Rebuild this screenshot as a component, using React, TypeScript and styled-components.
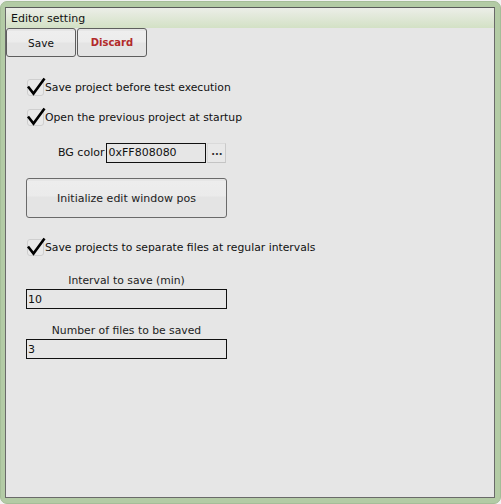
import React from "react";
import styled, { createGlobalStyle } from "styled-components";

const Global = createGlobalStyle`
  html, body { margin: 0; padding: 0; background: #f2f2f2; }
  body { font-family: "DejaVu Sans", "Liberation Sans", sans-serif; }
  * { box-sizing: border-box; }
`;

const Frame = styled.div`
  width: 501px;
  height: 503px;
  margin-top: 1px;
  background: #b3cba5;
  border: 1px solid #a5bd98;
  border-radius: 7px;
  padding: 5px 5px 5px 4px;
  display: flex;
`;

const Panel = styled.div`
  flex: 1;
  border: 1px solid #6a6a6a;
  border-top-color: #5a5a5a;
  background: #e6e6e6;
  display: flex;
  flex-direction: column;
`;

const TitleBar = styled.div`
  height: 20px;
  background: linear-gradient(#eceee8, #d3e1c5);
  font-size: 11px;
  color: #111;
  padding-left: 5px;
  display: flex;
  align-items: center;
`;

const Toolbar = styled.div`
  display: flex;
  gap: 1px;
`;

const ToolButton = styled.button<{ $danger?: boolean }>`
  width: 70px;
  height: 29px;
  margin: 0;
  border: 1px solid #5e5e5e;
  border-radius: 3px;
  background: linear-gradient(#e6e6e6 0, #e6e6e6 2px, #eeeeee 2px, #ececec 13px, #e4e4e4 14px, #e4e4e4 100%);
  font-family: "DejaVu Sans", sans-serif;
  font-size: ${(p) => (p.$danger ? "10px" : "10.5px")};
  font-weight: ${(p) => (p.$danger ? "bold" : "normal")};
  color: ${(p) => (p.$danger ? "#b22a2a" : "#111")};
  padding: 0;
`;

const Content = styled.div`
  display: flex;
  flex-direction: column;
  padding: 21px 0 0 20px;
`;

const CheckRow = styled.div<{ $top: number }>`
  display: flex;
  align-items: center;
  height: 19px;
  margin-top: ${(p) => p.$top}px;
  font-size: 10.8px;
  color: #111;
`;

const Box = styled.span`
  position: relative;
  width: 17px;
  height: 17px;
  border: 1px solid #cfcfcf;
  border-radius: 3px;
  background: #e9e9e9;
  margin-left: 1px;
  margin-right: 1px;
  flex-shrink: 0;
`;

const Tick = styled.svg`
  position: absolute;
  left: -1px;
  top: -3px;
  width: 19px;
  height: 20px;
  overflow: visible;
`;

const ColorRow = styled.div`
  display: flex;
  align-items: center;
  margin-top: 15px;
  height: 21px;
`;

const ColorLabel = styled.span`
  font-size: 11px;
  color: #111;
  margin-left: 32px;
  margin-right: 2px;
`;

const TextBox = styled.div<{ $w: number }>`
  width: ${(p) => p.$w}px;
  height: 20px;
  border: 1px solid #111;
  background: #e6e6e6;
  font-size: 11px;
  color: #111;
  padding-left: 1px;
  display: flex;
  align-items: center;
`;

const DotsButton = styled.div`
  width: 19px;
  height: 20px;
  margin-left: 1px;
  margin-top: 1px;
  background: #e8e8e8;
  border: 1px solid #dadada;
  border-right-color: #cacaca;
  border-bottom-color: #c4c4c4;
  font-size: 10px;
  font-weight: bold;
  color: #333;
  display: flex;
  align-items: center;
  justify-content: center;
  padding-bottom: 3px;
`;

const BigButton = styled.div`
  width: 201px;
  height: 40px;
  margin-top: 15px;
  border: 1px solid #6a6a6a;
  border-radius: 3px;
  background: linear-gradient(#e6e6e6 0, #e6e6e6 2px, #ededed 2px, #ebebeb 17px, #e4e4e4 18px, #e4e4e4 100%);
  font-size: 11px;
  color: #222;
  display: flex;
  align-items: center;
  justify-content: center;
`;

const Field = styled.div<{ $top: number }>`
  display: flex;
  flex-direction: column;
  width: 201px;
  margin-top: ${(p) => p.$top}px;
`;

const FieldLabel = styled.div`
  font-size: 10.8px;
  color: #222;
  text-align: center;
  height: 15px;
  line-height: 15px;
  margin-bottom: 1px;
`;

const Check = () => (
  <Box>
    <Tick viewBox="0 0 19 20">
      <path
        d="M1 9.5 L6.5 16.5 L17.5 1.5"
        fill="none"
        stroke="#000"
        strokeWidth="2.6"
        strokeLinejoin="miter"
      />
    </Tick>
  </Box>
);

export default function App() {
  return (
    <>
      <Global />
      <Frame>
        <Panel>
          <TitleBar>Editor setting</TitleBar>
          <Toolbar>
            <ToolButton>Save</ToolButton>
            <ToolButton $danger>Discard</ToolButton>
          </Toolbar>
          <Content>
            <CheckRow $top={0}>
              <Check />
              Save project before test execution
            </CheckRow>
            <CheckRow $top={11}>
              <Check />
              Open the previous project at startup
            </CheckRow>
            <ColorRow>
              <ColorLabel>BG color</ColorLabel>
              <TextBox $w={100}>0xFF808080</TextBox>
              <DotsButton>...</DotsButton>
            </ColorRow>
            <BigButton>Initialize edit window pos</BigButton>
            <CheckRow $top={20}>
              <Check />
              Save projects to separate files at regular intervals
            </CheckRow>
            <Field $top={16}>
              <FieldLabel>Interval to save (min)</FieldLabel>
              <TextBox $w={201}>10</TextBox>
            </Field>
            <Field $top={14}>
              <FieldLabel>Number of files to be saved</FieldLabel>
              <TextBox $w={201}>3</TextBox>
            </Field>
          </Content>
        </Panel>
      </Frame>
    </>
  );
}
